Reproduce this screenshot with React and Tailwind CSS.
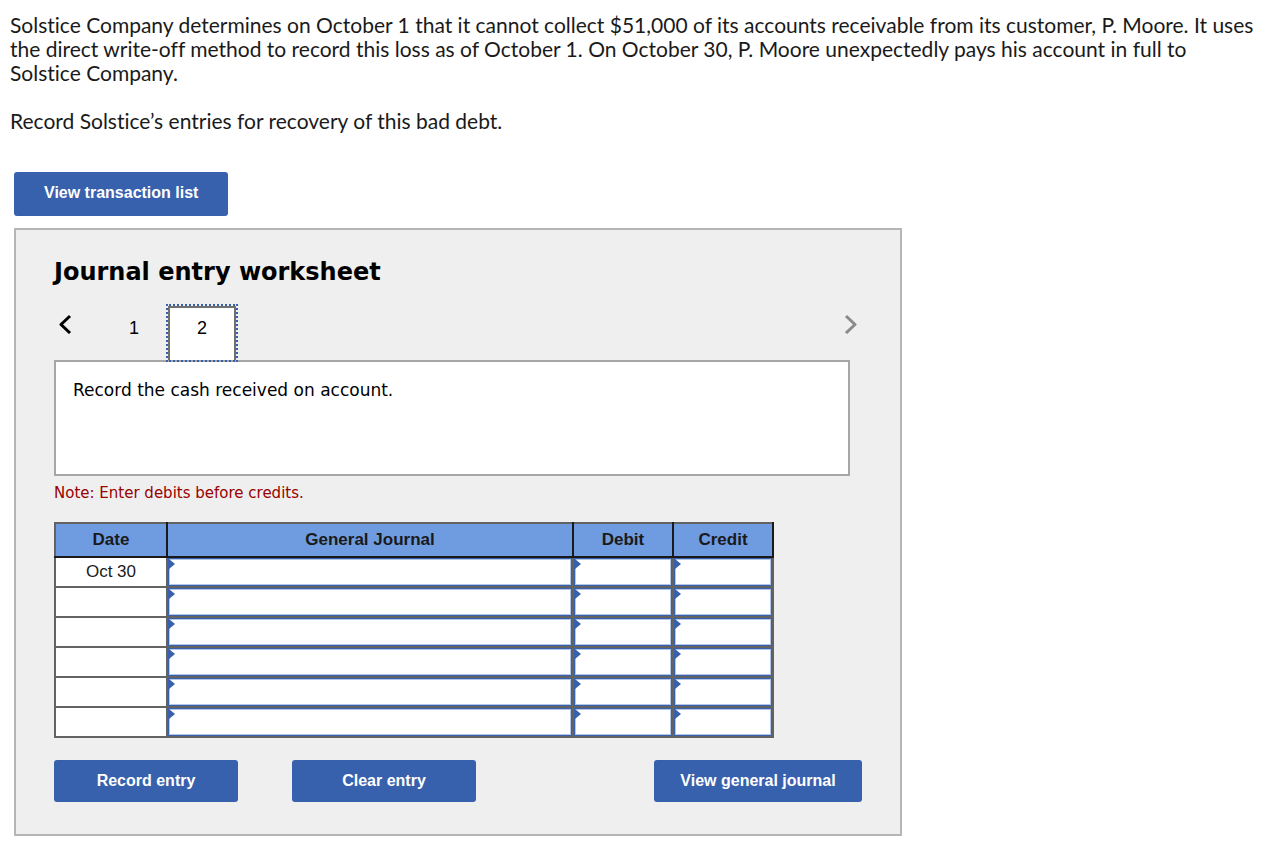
import { useState } from 'react'

const rows = ['Oct 30', '', '', '', '', '']

const fields = [
  { key: 'account', label: 'General Journal' },
  { key: 'debit', label: 'Debit' },
  { key: 'credit', label: 'Credit' },
]

const notes = {
  1: 'Record the write-off of the account receivable.',
  2: 'Record the cash received on account.',
}

function Chevron({ d, className }) {
  return <svg className={`h-5 w-4 ${className}`} viewBox="0 0 16 20" fill="none" stroke="currentColor" strokeWidth={3} strokeLinejoin="round" aria-hidden="true"><path d={d} /></svg>
}

function ActionButton({ children, className, onClick }) {
  return <button type="button" onClick={onClick} className={`rounded-[3px] bg-[#3760ad] font-['Liberation_Sans',Arial,sans-serif] text-[16px] leading-5 font-bold text-white hover:bg-[#2d5196] ${className}`}>{children}</button>
}

function EntryCell({ label, value, onChange }) {
  return <td className="relative border-2 border-[#636363] bg-white p-0">
    <input aria-label={label} value={value} onChange={(event) => onChange(event.target.value)} className="block h-7 w-full border border-[#3760ad] px-2 inset-ring inset-ring-[#b3c6e8] outline-none" />
    <svg className="pointer-events-none absolute top-px left-0 h-[10px] w-[7px]" viewBox="0 0 7 10" aria-hidden="true"><path d="M0 0H1L7 5L1 10H0Z" fill="#3760ad" /></svg>
  </td>
}

export default function App() {
  const [step, setStep] = useState(2)
  const [entries, setEntries] = useState({})

  const setField = (id, value) => setEntries((current) => ({ ...current, [id]: value }))

  return <main className="bg-white px-[10px] pt-[13px] pb-[30px] font-['Liberation_Sans',Arial,sans-serif] text-[#1a1a1a]">
    <div className="space-y-6 pr-[14px] font-[Lato,sans-serif] text-[21px] leading-6 [font-variant-ligatures:none]">
      <p>Solstice Company determines on October 1 that it cannot collect $51,000 of its accounts receivable from its customer, P. Moore. It uses the direct write-off method to record this loss as of October 1. On October 30, P. Moore unexpectedly pays his account in full to Solstice Company.</p>
      <p>Record Solstice’s entries for recovery of this bad debt.</p>
    </div>

    <ActionButton className="mt-[39px] ml-1 h-11 px-[30px] pb-[2px]">View transaction list</ActionButton>

    <section className="mt-3 ml-1 max-w-[888px] border-2 border-[#b5b5b5] bg-[#efefef] px-[38px] pt-[26px] pb-8">
      <h1 className="font-['DejaVu_Sans',Verdana,sans-serif] text-[24px] leading-8 font-bold text-black">Journal entry worksheet</h1>

      <nav aria-label="Entries" className="mt-[18px] flex h-[54px] items-stretch text-[18px] text-black">
        <button type="button" aria-label="Previous entry" onClick={() => setStep(1)} className="flex w-[46px] items-start pt-2 pl-[3px]"><Chevron d="M13 2L4 10.500L13 19" className="text-black" /></button>
        {[1, 2].map((number) => <button key={number} type="button" aria-pressed={step === number} onClick={() => setStep(number)} className={`w-[68px] pb-3 ${step === number ? 'relative z-10 border-2 border-b-0 border-[#707070] bg-white outline-2 outline-[#3760ad] outline-dotted' : 'border-2 border-b-0 border-transparent'}`}>{number}</button>)}
        <button type="button" aria-label="Next entry" onClick={() => setStep(2)} className="ml-auto flex items-start pt-2 pr-[3px]"><Chevron d="M3 2L12 10.500L3 19" className="text-[#8a8a8a]" /></button>
      </nav>

      <div className="mr-3 min-h-[116px] border-2 border-[#a6a6a6] bg-white px-[17px] py-4">
        <p className="font-['DejaVu_Sans',Verdana,sans-serif] text-[17px] leading-6 text-black">{notes[step]}</p>
      </div>
      <p className="mt-[6px] font-['DejaVu_Sans',Verdana,sans-serif] text-[15px] leading-[22px] text-[#990000]">Note: Enter debits before credits.</p>

      <table className="mt-[18px] w-full max-w-[720px] table-fixed border-collapse border-2 border-[#636363] text-[17px] leading-6">
        <colgroup>
          <col className="w-[112px]" />
          <col />
          <col className="w-[100px]" />
          <col className="w-[100px]" />
        </colgroup>
        <thead>
          <tr className="h-[34px] bg-[#6f9be0]">
            {['Date', 'General Journal', 'Debit', 'Credit'].map((title) => <th key={title} scope="col" className="border-r-2 border-b-2 border-[#1a1a1a] p-0 font-bold">{title}</th>)}
          </tr>
        </thead>
        <tbody>
          {rows.map((date, index) => <tr key={index} className="h-[30px]">
            <td className="border-2 border-[#636363] bg-white p-0 text-center">{date}</td>
            {fields.map((field) => {
              const id = `${step}-${index}-${field.key}`
              return <EntryCell key={field.key} label={`${field.label}, row ${index + 1}`} value={entries[id] || ''} onChange={(value) => setField(id, value)} />
            })}
          </tr>)}
        </tbody>
      </table>

      <div className="mt-[22px] flex">
        <ActionButton className="h-[42px] w-[184px]">Record entry</ActionButton>
        <ActionButton className="ml-[54px] h-[42px] w-[184px]" onClick={() => setEntries({})}>Clear entry</ActionButton>
        <ActionButton className="ml-auto h-[42px] w-[208px]">View general journal</ActionButton>
      </div>
    </section>
  </main>
}
